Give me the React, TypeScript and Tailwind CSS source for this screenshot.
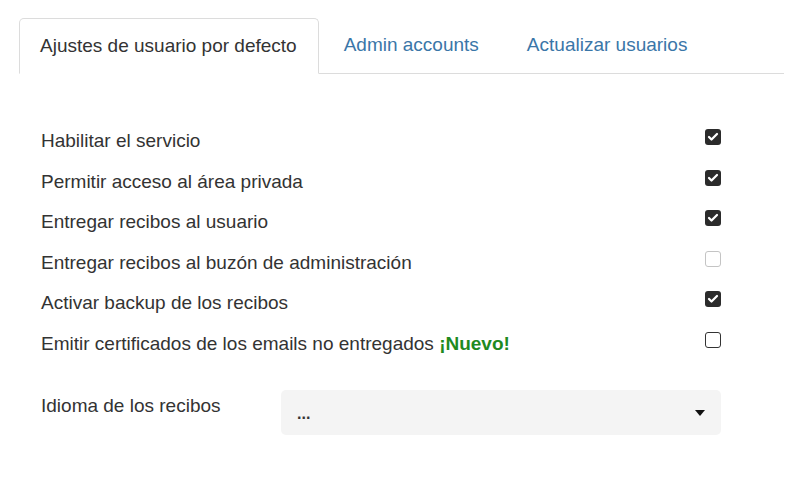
import { Check } from "lucide-react";

type Row = { label: string; checked: boolean; isNew?: boolean; faint?: boolean };

const rows: Row[] = [
  { label: "Habilitar el servicio", checked: true },
  { label: "Permitir acceso al área privada", checked: true },
  { label: "Entregar recibos al usuario", checked: true },
  { label: "Entregar recibos al buzón de administración", checked: false, faint: true },
  { label: "Activar backup de los recibos", checked: true },
  { label: "Emitir certificados de los emails no entregados", checked: false, isNew: true },
];

function Box({ checked, faint }: { checked: boolean; faint?: boolean }) {
  if (checked)
    return <span className="flex h-4 w-4 items-center justify-center rounded-[3px] bg-[#2b2b2b]"><Check className="h-3 w-3 text-white" strokeWidth={4.5} /></span>;
  return <span className={`block h-4 w-4 rounded-[3px] bg-white ${faint ? "border border-[#c4c4c4]" : "border-[1.5px] border-[#333]"}`} />;
}

export default function App() {
  return <div className="h-[480px] w-[800px] bg-white text-[#333]" style={{ fontFamily: '"Liberation Sans", Arial, sans-serif' }}>
    <div className="ml-[19px] mr-4 flex border-b border-[#dcdcdc] pt-[18px] text-[19px]">
      <div className="-mb-px rounded-t-[5px] border border-b-white border-[#dcdcdc] bg-white py-[15px] pl-5 pr-[21px] leading-[24px]">Ajustes de usuario por defecto</div>
      <div className="py-[15px] pl-[25px] pr-[28px] leading-[24px] text-[#3a76a8]">Admin accounts</div>
      <div className="px-5 py-[15px] leading-[24px] text-[#3a76a8]">Actualizar usuarios</div>
    </div>
    <div className="pl-[41px] pr-[79px] pt-[47px] text-[19px]">
      {rows.map((r) => <div key={r.label} className="flex h-[40.5px] items-start justify-between">
        <span className="pt-[6px]">{r.label}{r.isNew ? <b className="text-[#1f8a1f]"> ¡Nuevo!</b> : null}</span>
        <span className="pt-[8px]"><Box checked={r.checked} faint={r.faint} /></span>
      </div>)}
      <div className="mt-[25px] flex items-start">
        <span className="w-[240px] pt-[3px]">Idioma de los recibos</span>
        <div className="mt-[1px] flex h-[45px] flex-1 items-center justify-between rounded-[5px] bg-[#f4f4f4] pl-4 pr-4 text-[16px] font-bold">
          <span className="pt-[3px]">...</span>
          <svg width="10" height="6" viewBox="0 0 10 6"><path d="M0 0h10L5 6z" fill="#111" /></svg>
        </div>
      </div>
    </div>
  </div>;
}
